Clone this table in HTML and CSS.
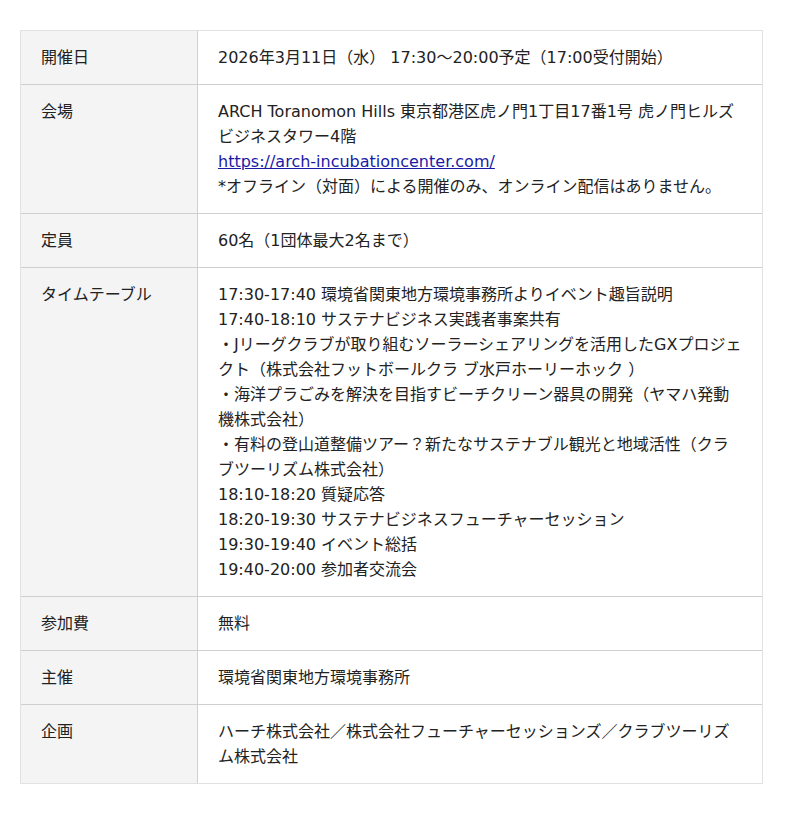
FILE: index.html
```html
<!DOCTYPE html>
<html lang="ja">
<head>
    <meta charset="UTF-8">
    <meta name="viewport" content="width=device-width, initial-scale=1.0">
    <title>イベント概要</title>
    <link rel="stylesheet" href="styles.css">
</head>
<body>
    <table class="info">
        <tr>
            <th>開催日</th>
            <td>2026年3月11日（水） 17:30〜20:00予定（17:00受付開始）</td>
        </tr>
        <tr>
            <th>会場</th>
            <td>ARCH Toranomon Hills 東京都港区虎ノ門1丁目17番1号 虎ノ門ヒルズビジネスタワー4階<br>
                <a href="#">https://arch-incubationcenter.com/</a><br>
                *オフライン（対面）による開催のみ、オンライン配信はありません。</td>
        </tr>
        <tr>
            <th>定員</th>
            <td>60名（1団体最大2名まで）</td>
        </tr>
        <tr>
            <th>タイムテーブル</th>
            <td>17:30-17:40 環境省関東地方環境事務所よりイベント趣旨説明<br>
                17:40-18:10 サステナビジネス実践者事案共有<br>
                ・Jリーグクラブが取り組むソーラーシェアリングを活用したGXプロジェクト（株式会社フットボールクラ ブ水戸ホーリーホック ）<br>
                ・海洋プラごみを解決を目指すビーチクリーン器具の開発（ヤマハ発動機株式会社）<br>
                ・有料の登山道整備ツアー？新たなサステナブル観光と地域活性（クラブツーリズム株式会社）<br>
                18:10-18:20 質疑応答<br>
                18:20-19:30 サステナビジネスフューチャーセッション<br>
                19:30-19:40 イベント総括<br>
                19:40-20:00 参加者交流会</td>
        </tr>
        <tr>
            <th>参加費</th>
            <td>無料</td>
        </tr>
        <tr>
            <th>主催</th>
            <td>環境省関東地方環境事務所</td>
        </tr>
        <tr>
            <th>企画</th>
            <td>ハーチ株式会社／株式会社フューチャーセッションズ／クラブツーリズム株式会社</td>
        </tr>
    </table>
</body>
</html>
```

FILE: styles.css
```css
body{
    margin: 0;
    padding: 30px 20px;
    background: #fff;
    color: #222;
    font-family: "DejaVu Sans", "Noto Sans CJK JP", sans-serif;
    font-size: 16px;
    line-height: 25px;
}
.info{
    width: 743px;
    border: 1px solid #e2e2e2;
    border-collapse: separate;
    border-spacing: 0;
}
.info th,
.info td{
    padding: 14px 20px;
    vertical-align: top;
    text-align: left;
    font-weight: normal;
}
.info th{
    width: 136px;
    background: #f4f4f4;
    border-right: 1px solid #cfcfcf;
}
.info tr + tr th,
.info tr + tr td{
    border-top: 1px solid #cfcfcf;
}
.info a{
    color: #1a1aa6;
}
```
